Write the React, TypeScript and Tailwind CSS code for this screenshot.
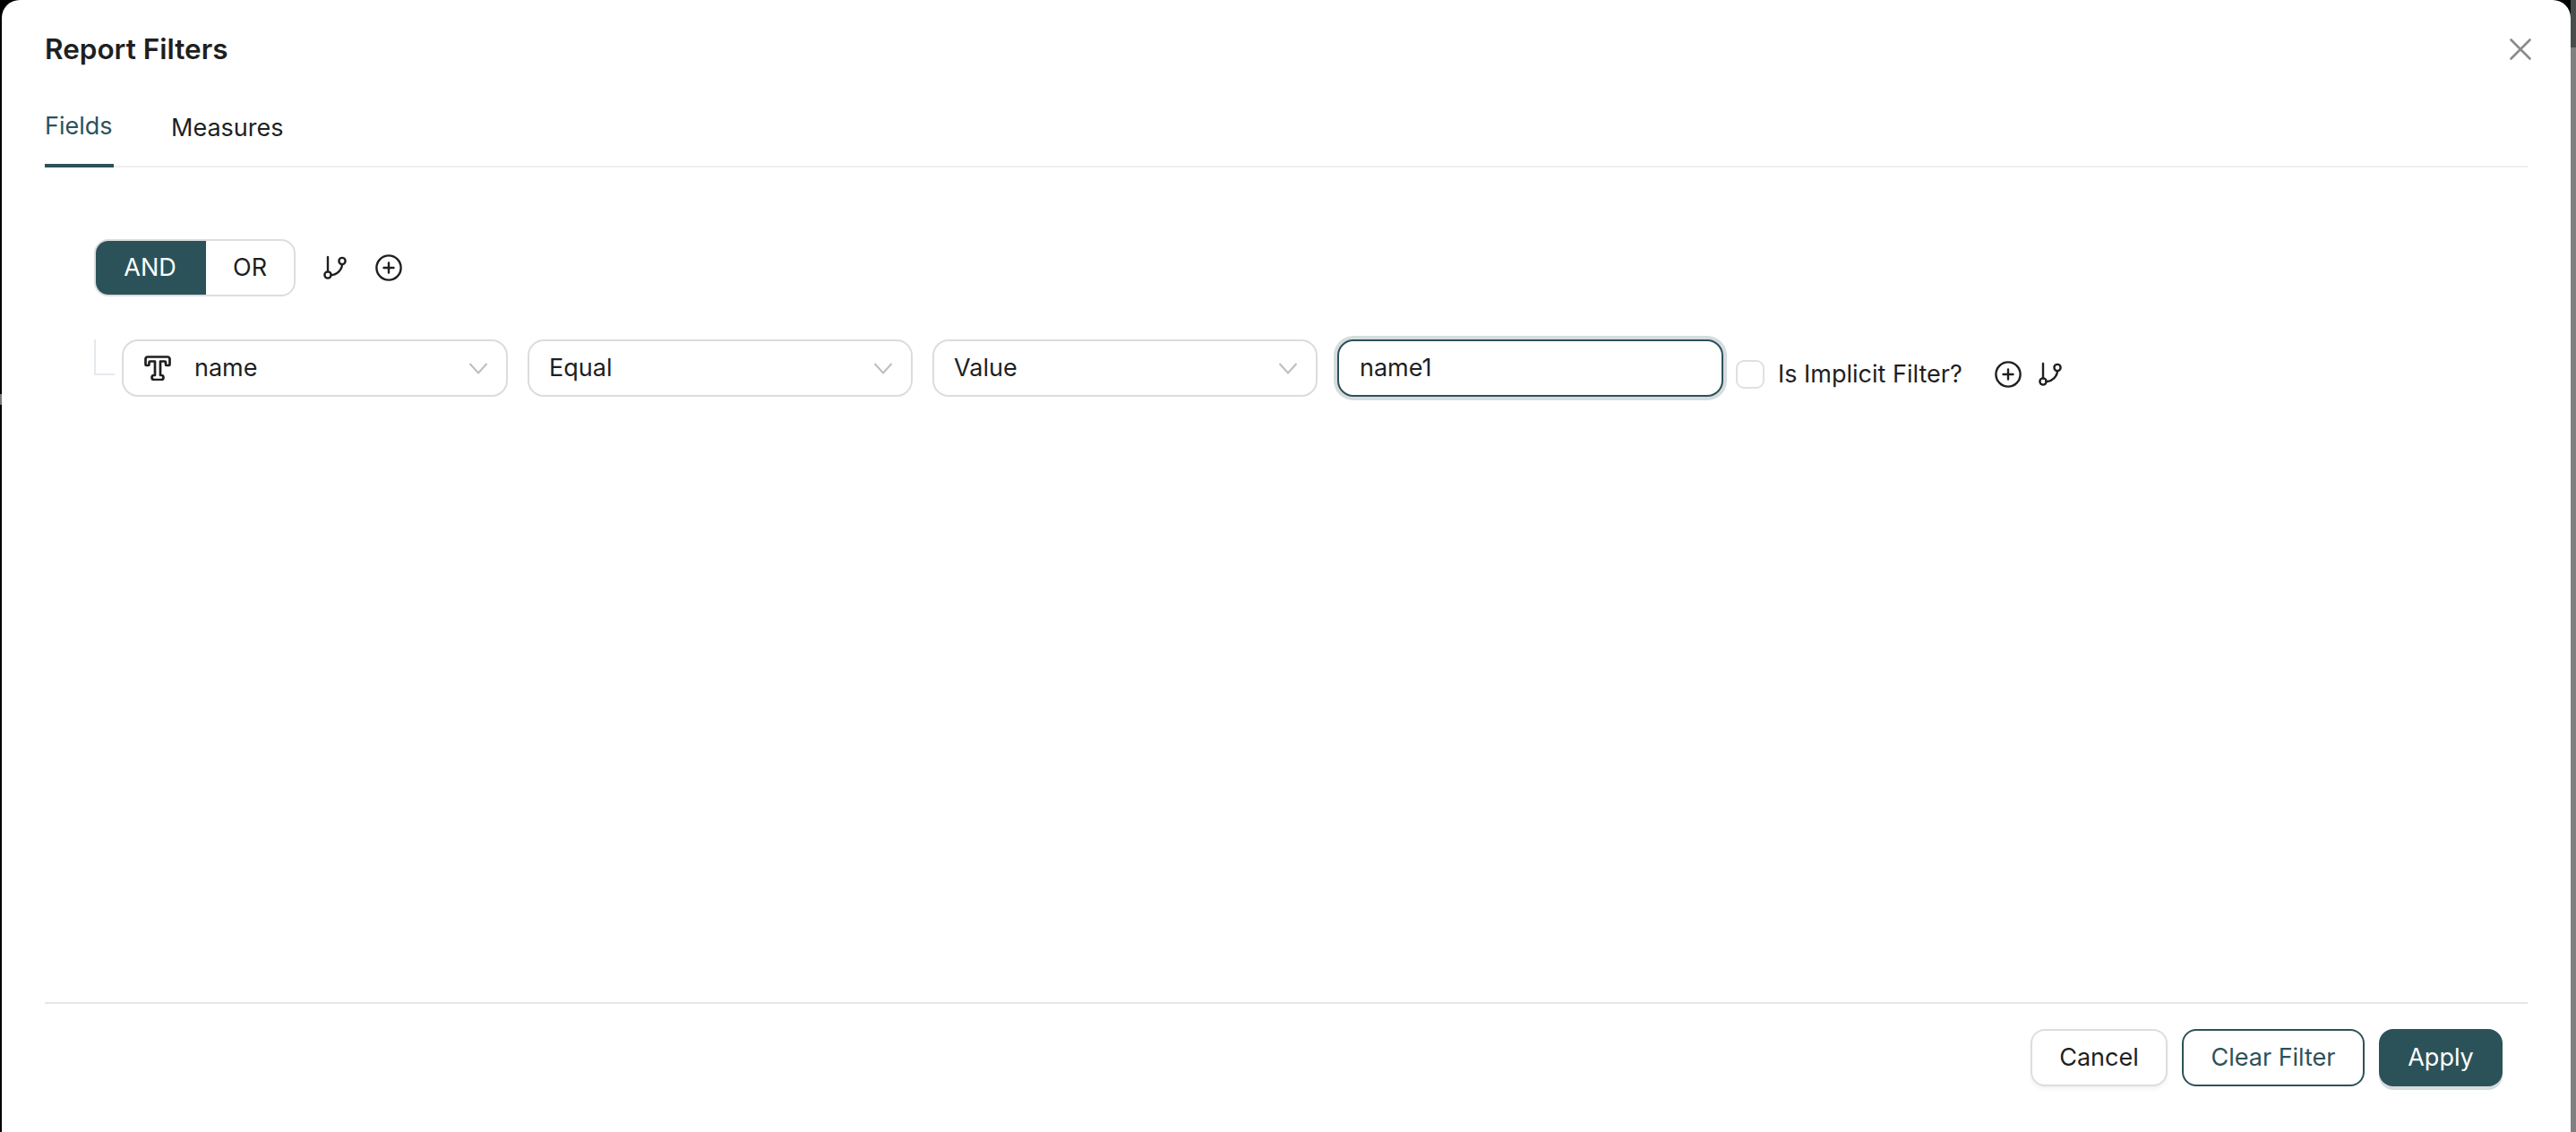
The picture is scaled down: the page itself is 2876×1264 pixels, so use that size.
const teal = "#2c5259";

function BranchIcon() {
  return (
    <svg width="28" height="28" viewBox="0 0 28 28" fill="none" stroke="#1f1f1f" strokeWidth="2.4" strokeLinecap="round">
      <circle cx="6" cy="22" r="3.6" />
      <circle cx="22" cy="6.5" r="3.6" />
      <path d="M6 18.4V2" />
      <path d="M22 10.1c0 6-6 11.9-12.4 11.9" />
    </svg>
  );
}

function PlusIcon() {
  return (
    <svg width="30" height="30" viewBox="0 0 30 30" fill="none" stroke="#1f1f1f" strokeWidth="2.4" strokeLinecap="round">
      <circle cx="15" cy="15" r="13.6" />
      <path d="M15 9.5v11M9.5 15h11" />
    </svg>
  );
}

function TextIcon() {
  return (
    <svg width="30" height="28" viewBox="0 0 30 28" fill="none" stroke="#1f1f1f" strokeWidth="2.7" strokeLinejoin="round">
      <path d="M1.5 10V4a2.5 2.5 0 0 1 2.5-2.5h22a2.5 2.5 0 0 1 2.5 2.5v6a1 1 0 0 1-1 1h-2.5a1 1 0 0 1-1-1V7.5a1 1 0 0 0-1-1H18v15.5h1a2.5 2.5 0 0 1 0 5h-8a2.5 2.5 0 0 1 0-5h1V6.5H6.5a1 1 0 0 0-1 1V10a1 1 0 0 1-1 1h-2a1 1 0 0 1-1-1z" />
    </svg>
  );
}

function Chevron() {
  return (
    <svg width="22" height="14" viewBox="0 0 22 14" fill="none" stroke="#bdbdbd" strokeWidth="2">
      <path d="M1.5 2 11 12.5 20.5 2" />
    </svg>
  );
}

function Select({ label, icon, width }: { label: string; icon?: boolean; width: string }) {
  return (
    <div className={`flex h-[64px] items-center rounded-[18px] border-2 border-[#dcdcdc] bg-white pr-[20px] ${width} ${icon ? "pl-[23px]" : "pl-[22px]"}`}>
      {icon && (
        <span className="mr-[26px] flex">
          <TextIcon />
        </span>
      )}
      <span className="flex-1">{label}</span>
      <Chevron />
    </div>
  );
}

export default function App() {
  return (
    <div className="flex h-[1264px] w-[2876px] overflow-hidden bg-black font-['Inter',sans-serif] text-[27px] text-[#1f1f1f]">
      <div className="flex w-[2px] flex-col">
        <div className="h-[440px]" />
        <div className="h-[12px] bg-[#777777]" />
      </div>

      <div className="flex flex-1 flex-col rounded-t-[20px] bg-white pl-[48px] pr-[48px]">
        <div className="flex h-[110px] items-center justify-between">
          <h1 className="text-[31.5px] font-semibold">Report Filters</h1>
          <button className="mr-[-4px] flex">
            <svg width="24" height="24" viewBox="0 0 24 24" fill="none" stroke="#8a8a8a" strokeWidth="2.6" strokeLinecap="round">
              <path d="M1.5 1.5l21 21M22.5 1.5l-21 21" />
            </svg>
          </button>
        </div>

        <div className="flex h-[77px] gap-[64px] border-b-2 border-[#eeeeee]">
          <div className="mb-[-2px] flex h-[77px] w-[77px] items-center border-b-4 border-[#2c5259] pb-[10px] text-[#2c5259]">Fields</div>
          <div className="flex h-[77px] items-center pb-[10px]">Measures</div>
        </div>

        <div className="flex-1 pl-[56px]">
          <div className="mt-[80px] flex items-center">
            <div className="-ml-[1px] flex h-[64px] w-[225px] overflow-hidden rounded-[16px] border-2 border-[#dddddd]">
              <div className="-m-[2px] flex w-[125px] items-center justify-center text-white" style={{ backgroundColor: teal }}>
                AND
              </div>
              <div className="flex flex-1 items-center justify-center pl-[2px]">OR</div>
            </div>
            <span className="ml-[30px] flex">
              <BranchIcon />
            </span>
            <span className="ml-[31px] flex">
              <PlusIcon />
            </span>
          </div>

          <div className="-ml-[1px] mt-[48px] flex items-start">
            <div className="mr-[8px] h-[40px] w-[23px] border-b-2 border-l-2 border-[#e4e9ee]" />
            <Select label="name" icon width="w-[431px]" />
            <span className="w-[22px]" />
            <Select label="Equal" width="w-[430px]" />
            <span className="w-[22px]" />
            <Select label="Value" width="w-[430px]" />
            <span className="w-[22px]" />
            <div className="flex h-[64px] w-[431px] items-center rounded-[18px] border-2 border-[#2c5259] bg-white pl-[23px] shadow-[0_0_0_4px_#d5dcdd]">
              name1
            </div>
            <div className="ml-[14px] mt-[19px] flex items-center">
              <span className="h-[32px] w-[32px] rounded-[9px] border-2 border-[#e0e0e0]" />
              <span className="ml-[15px] w-[209px]">Is Implicit Filter?</span>
              <span className="ml-[33px] flex">
                <PlusIcon />
              </span>
              <span className="ml-[18px] flex">
                <BranchIcon />
              </span>
            </div>
          </div>
        </div>

        <div className="flex h-[145px] justify-end gap-[16px] border-t-2 border-[#e6e6e6] pr-[28px] pt-[28px]">
          <button className="h-[64px] w-[153px] rounded-[16px] border-2 border-[#dddddd] bg-white shadow-[0_3px_4px_rgba(0,0,0,0.05)]">Cancel</button>
          <button className="h-[64px] w-[204px] rounded-[16px] border-2 border-[#2c5259] bg-white text-[#2c5259]">Clear Filter</button>
          <button className="h-[64px] w-[138px] rounded-[16px] bg-[#2c5259] text-white shadow-[0_4px_0_#d5dcdd]">Apply</button>
        </div>
      </div>

      <div className="flex w-[6px] flex-col">
        <div className="h-[53px] bg-[#4a4d4d]" />
        <div className="flex-1 bg-[#808080]" />
      </div>
    </div>
  );
}
